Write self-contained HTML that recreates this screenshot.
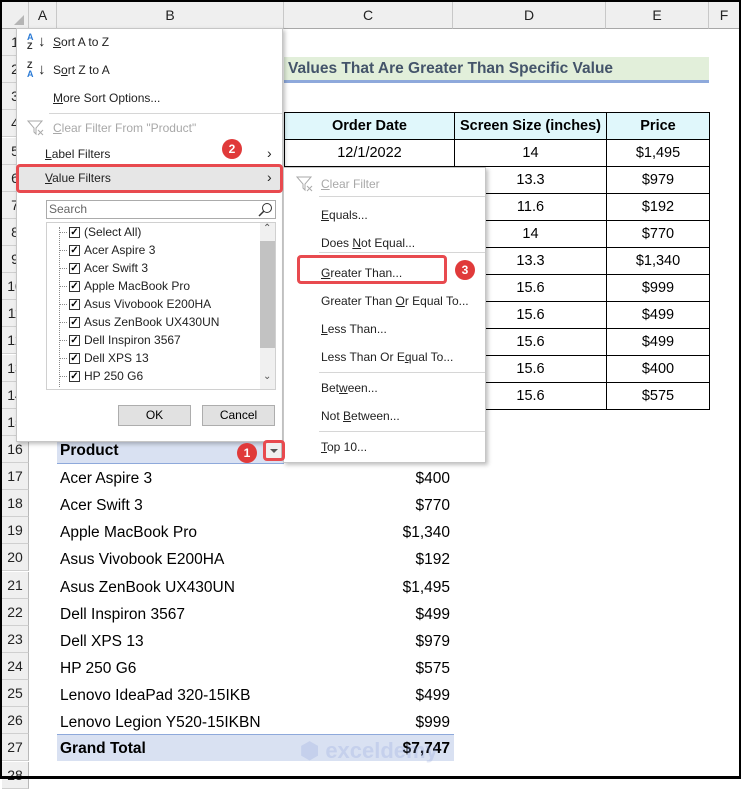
<!DOCTYPE html>
<html><head><meta charset="utf-8">
<style>
*{box-sizing:border-box;margin:0;padding:0}
body{width:741px;height:779px;overflow:hidden;background:#fff;font-family:"Liberation Sans",sans-serif;position:relative}
.a{position:absolute}
.hdr{top:2px;height:27px;background:#efefef;border-bottom:1px solid #a8a8a8;border-right:1px solid #c8c8c8;font-size:14px;text-align:center;line-height:27px;color:#222}
.rn{left:2px;width:27px;height:27px;border-bottom:1px solid #cfcfcf;border-right:1px solid #b8b8b8;background:#efefef;font-size:14px;text-align:center;line-height:27px;color:#222}
.cell{font-size:15.5px;height:27px;line-height:27px;color:#000}
.tb{border:1px solid #000;text-align:center;font-size:14.5px;height:27px;line-height:26px}
.mi{font-family:"Liberation Sans",sans-serif;font-size:12px;color:#222;position:absolute}
.dis{color:#a8a8a8}
u{text-decoration:underline}
.badge{position:absolute;width:20px;height:20px;border-radius:50%;background:#e03a3a;color:#fff;font-size:12px;font-weight:bold;text-align:center;line-height:20px}
.redbox{position:absolute;border:3px solid #e84a4f;border-radius:4px}
</style></head><body>
<div class="a" style="left:0;top:0;width:741px;height:779px;border:2px solid #000;border-bottom-width:3px;z-index:50;pointer-events:none"></div>

<div class="a hdr" style="left:2px;width:27px"><div style="position:absolute;right:4px;bottom:3px;width:0;height:0;border-left:10px solid transparent;border-bottom:10px solid #b5b5b5"></div></div>
<div class="a hdr" style="left:29px;width:28px">A</div>
<div class="a hdr" style="left:57px;width:227px">B</div>
<div class="a hdr" style="left:284px;width:169px">C</div>
<div class="a hdr" style="left:453px;width:153px">D</div>
<div class="a hdr" style="left:606px;width:103px">E</div>
<div class="a hdr" style="left:709px;width:30px;border-right:none">F</div>

<div id="rows"></div>
<script>
var h='';for(var i=1;i<=28;i++){var t=29+(i-1)*27.13;h+='<div class="a rn" style="top:'+t+'px">'+i+'</div>';}
document.getElementById('rows').innerHTML=h;
</script>

<div class="a" style="left:284px;top:57px;width:425px;height:26px;background:#e2efda;border-bottom:3px solid #8ea9db;font-weight:bold;font-size:15.5px;color:#44546a;line-height:24px;padding-left:4px">Values That Are Greater Than Specific Value</div>

<div class="a" style="left:284px;top:112px">
<table style="border-collapse:collapse;font-family:'Liberation Sans',sans-serif">
<tr style="background:#e0f7fb;font-weight:bold"><td class="tb" style="width:170px">Order Date</td><td class="tb" style="width:152px">Screen Size (inches)</td><td class="tb" style="width:103px">Price</td></tr>
<tr><td class="tb">12/1/2022</td><td class="tb">14</td><td class="tb">$1,495</td></tr>
<tr><td class="tb"></td><td class="tb">13.3</td><td class="tb">$979</td></tr>
<tr><td class="tb"></td><td class="tb">11.6</td><td class="tb">$192</td></tr>
<tr><td class="tb"></td><td class="tb">14</td><td class="tb">$770</td></tr>
<tr><td class="tb"></td><td class="tb">13.3</td><td class="tb">$1,340</td></tr>
<tr><td class="tb"></td><td class="tb">15.6</td><td class="tb">$999</td></tr>
<tr><td class="tb"></td><td class="tb">15.6</td><td class="tb">$499</td></tr>
<tr><td class="tb"></td><td class="tb">15.6</td><td class="tb">$499</td></tr>
<tr><td class="tb"></td><td class="tb">15.6</td><td class="tb">$400</td></tr>
<tr><td class="tb"></td><td class="tb">15.6</td><td class="tb">$575</td></tr>
</table></div>

<div class="a" style="left:57px;top:438px;width:227px;height:26px;background:#d9e1f2;border-bottom:1px solid #8ea9db;font-weight:bold;font-size:15.5px;line-height:26px;padding-left:3px">Product</div>
<div id="piv"></div>
<script>
var d=[["Acer Aspire 3","$400"],["Acer Swift 3","$770"],["Apple MacBook Pro","$1,340"],["Asus Vivobook E200HA","$192"],["Asus ZenBook UX430UN","$1,495"],["Dell Inspiron 3567","$499"],["Dell XPS 13","$979"],["HP 250 G6","$575"],["Lenovo IdeaPad 320-15IKB","$499"],["Lenovo Legion Y520-15IKBN","$999"]];
var h='';for(var i=0;i<d.length;i++){var t=465+i*27.13;h+='<div class="a cell" style="left:60px;top:'+t+'px">'+d[i][0]+'</div><div class="a cell" style="left:300px;width:150px;text-align:right;top:'+t+'px">'+d[i][1]+'</div>';}
document.getElementById('piv').innerHTML=h;
</script>
<div class="a" style="left:57px;top:734px;width:397px;height:27px;background:#d9e1f2;border-top:1px solid #8ea9db;font-weight:bold;font-size:15.5px;line-height:27px;padding-left:3px">Grand Total<span style="position:absolute;right:4px">$7,747</span></div>
<div class="a" style="left:300px;top:738px;font-size:22px;font-weight:bold;color:rgba(140,160,220,0.25)">⬢ exceldemy</div>

<div class="a" style="left:16px;top:28px;width:267px;height:414px;background:#fff;border:1px solid #c6c6c6;box-shadow:2px 2px 4px rgba(0,0,0,0.25);z-index:10">
 <div class="mi" style="left:10px;top:4px;font-size:9px;line-height:9px;color:#2a7ad5;font-weight:bold">A<br><span style="color:#333">Z</span></div><div class="mi" style="left:21px;top:4px;font-size:15px">↓</div>
 <div class="mi" style="left:36px;top:6px"><u>S</u>ort A to Z</div>
 <div class="mi" style="left:10px;top:32px;font-size:9px;line-height:9px;color:#333;font-weight:bold">Z<br><span style="color:#2a7ad5">A</span></div><div class="mi" style="left:21px;top:32px;font-size:15px">↓</div>
 <div class="mi" style="left:36px;top:34px">S<u>o</u>rt Z to A</div>
 <div class="mi" style="left:36px;top:62px"><u>M</u>ore Sort Options...</div>
 <div class="a" style="left:32px;top:84px;width:233px;height:1px;background:#d6d6d6"></div>
 <svg class="a" style="left:10px;top:91px" width="18" height="16"><path d="M1 1H15L9 8V14L7 12V8Z" fill="none" stroke="#aaa"/><path d="M11 10L16 15M16 10L11 15" stroke="#aaa"/></svg>
 <div class="mi dis" style="left:36px;top:92px"><u>C</u>lear Filter From "Product"</div>
 <div class="mi" style="left:28px;top:118px"><u>L</u>abel Filters</div><div class="mi" style="left:250px;top:116px;font-size:14px">›</div>
 <div class="a" style="left:1px;top:136px;width:264px;height:26px;background:#e6e6e6"></div>
 <div class="mi" style="left:28px;top:142px"><u>V</u>alue Filters</div><div class="mi" style="left:250px;top:140px;font-size:14px">›</div>
 <div class="a" style="left:29px;top:171px;width:230px;height:19px;border:1px solid #ababab;font-size:12px;color:#666;line-height:17px;padding-left:2px">Search<svg style="position:absolute;right:2px;top:1px" width="15" height="15"><circle cx="9" cy="6" r="4.5" fill="none" stroke="#333"/><path d="M6 9L1 14" stroke="#333" stroke-width="1.5"/></svg></div>
 <div class="a" style="left:29px;top:193px;width:230px;height:168px;border:1px solid #d0d0d0;overflow:hidden">
  <div class="a" style="left:213px;top:0;width:16px;height:167px;background:#f0f0f0"></div>
  <div class="a" style="left:213px;top:18px;width:15px;height:107px;background:#c2c2c2"></div>
  <div class="a" style="left:216px;top:0;font-size:10px;color:#555">⌃</div>
  <div class="a" style="left:216px;top:148px;font-size:10px;color:#555">⌄</div>
  <div class="a" style="left:12px;top:4px;height:160px;border-left:1px dotted #888"></div>
  <div id="lst"></div>
 </div>
 <div class="a" style="left:101px;top:376px;width:73px;height:21px;background:#e1e1e1;border:1px solid #adadad;font-size:12px;text-align:center;line-height:19px">OK</div>
 <div class="a" style="left:185px;top:376px;width:73px;height:21px;background:#e1e1e1;border:1px solid #adadad;font-size:12px;text-align:center;line-height:19px">Cancel</div>
</div>
<script>
var l=["(Select All)","Acer Aspire 3","Acer Swift 3","Apple MacBook Pro","Asus Vivobook E200HA","Asus ZenBook UX430UN","Dell Inspiron 3567","Dell XPS 13","HP 250 G6"];
var h='';for(var i=0;i<l.length;i++){var t=2+i*18;h+='<div class="a" style="left:12px;top:'+(t+7)+'px;width:8px;border-top:1px dotted #888"></div><div class="a" style="left:22px;top:'+(t+2)+'px;width:11px;height:11px;border:1px solid #333;font-size:10px;line-height:9px;text-align:center;font-weight:bold">✓</div><div class="a" style="left:37px;top:'+t+'px;font-size:12px;color:#222">'+l[i]+'</div>';}
document.getElementById('lst').innerHTML=h;
</script>

<div class="a" style="left:283px;top:167px;width:203px;height:296px;background:#fff;border:1px solid #c6c6c6;box-shadow:2px 2px 4px rgba(0,0,0,0.25);z-index:11">
 <svg class="a" style="left:12px;top:8px" width="18" height="16"><path d="M1 1H15L9 8V14L7 12V8Z" fill="none" stroke="#aaa"/><path d="M11 10L16 15M16 10L11 15" stroke="#aaa"/></svg>
 <div class="mi dis" style="left:37px;top:9px"><u>C</u>lear Filter</div>
 <div class="a" style="left:35px;top:28px;width:166px;height:1px;background:#d6d6d6"></div>
 <div class="mi" style="left:37px;top:40px"><u>E</u>quals...</div>
 <div class="mi" style="left:37px;top:68px">Does <u>N</u>ot Equal...</div>
 <div class="a" style="left:35px;top:84px;width:166px;height:1px;background:#d6d6d6"></div>
 <div class="mi" style="left:37px;top:98px"><u>G</u>reater Than...</div>
 <div class="mi" style="left:37px;top:126px">Greater Than <u>O</u>r Equal To...</div>
 <div class="mi" style="left:37px;top:154px"><u>L</u>ess Than...</div>
 <div class="mi" style="left:37px;top:182px">Less Than Or E<u>q</u>ual To...</div>
 <div class="a" style="left:35px;top:204px;width:166px;height:1px;background:#d6d6d6"></div>
 <div class="mi" style="left:37px;top:213px">Bet<u>w</u>een...</div>
 <div class="mi" style="left:37px;top:241px">Not <u>B</u>etween...</div>
 <div class="a" style="left:35px;top:263px;width:166px;height:1px;background:#d6d6d6"></div>
 <div class="mi" style="left:37px;top:272px"><u>T</u>op 10...</div>
</div>

<div class="redbox" style="left:16px;top:164px;width:267px;height:29px;z-index:20"></div>
<div class="badge" style="left:222px;top:139px;z-index:20">2</div>
<div class="redbox" style="left:297px;top:255px;width:150px;height:29px;z-index:20"></div>
<div class="badge" style="left:455px;top:260px;z-index:20">3</div>
<div class="a" style="left:265px;top:442px;width:17px;height:17px;background:#f0f0f0;border:1px solid #bbb;z-index:15"><div style="position:absolute;left:4px;top:6px;border-left:4px solid transparent;border-right:4px solid transparent;border-top:4px solid #555"></div></div>
<div class="redbox" style="left:263px;top:440px;width:22px;height:21px;z-index:20"></div>
<div class="badge" style="left:237px;top:443px;z-index:20">1</div>
</body></html>
